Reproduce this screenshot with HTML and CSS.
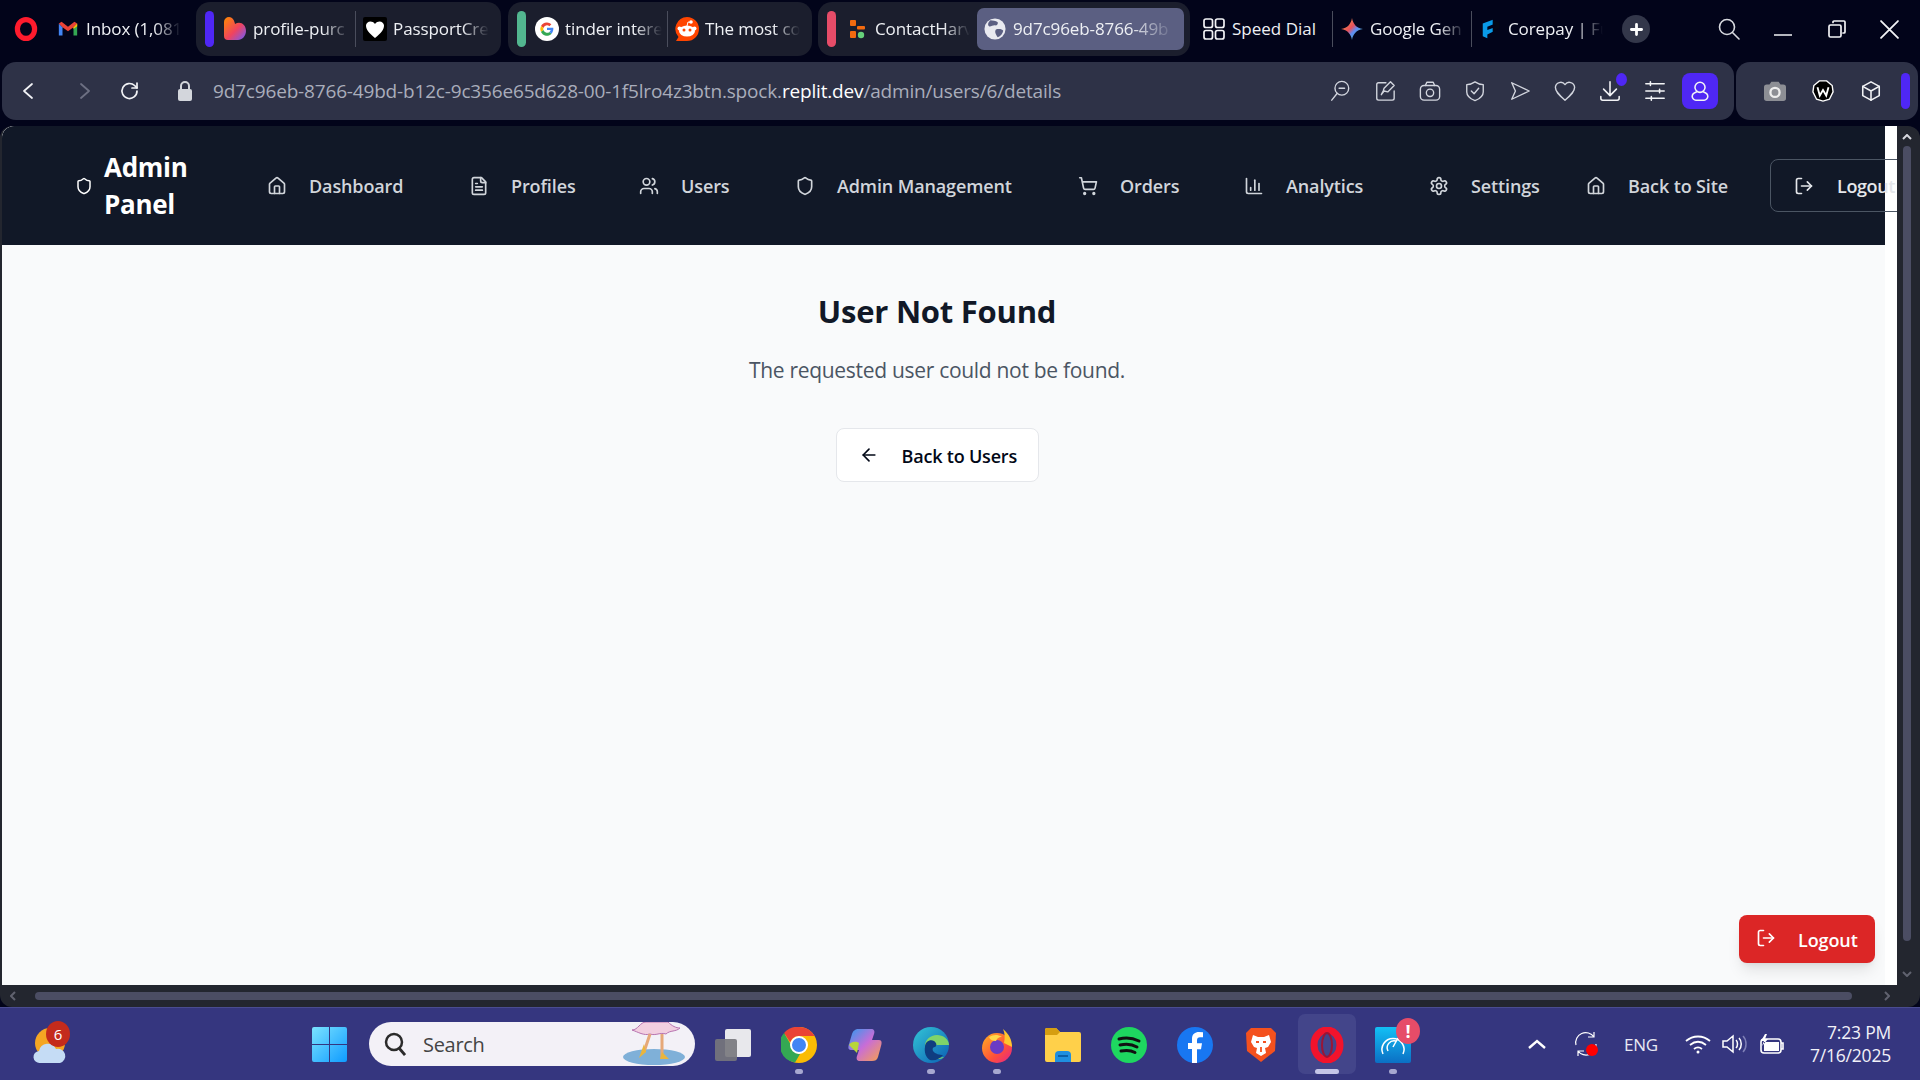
FILE: index.html
```html
<!DOCTYPE html>
<html lang="en">
<head>
<meta charset="utf-8">
<title>Admin Panel</title>
<link rel="stylesheet" href="styles.css">
</head>
<body>
<svg class="sprite" aria-hidden="true">
  <symbol id="i-shield" viewBox="0 0 24 24"><path d="M20 13c0 5-3.5 7.5-7.66 8.95a1 1 0 0 1-.67-.01C7.5 20.5 4 18 4 13V6a1 1 0 0 1 1-1c2 0 4.5-1.2 6.24-2.72a1.17 1.17 0 0 1 1.52 0C14.51 3.81 17 5 19 5a1 1 0 0 1 1 1z"/></symbol>
  <symbol id="i-home" viewBox="0 0 24 24"><path d="M15 21v-8a1 1 0 0 0-1-1h-4a1 1 0 0 0-1 1v8"/><path d="M3 10a2 2 0 0 1 .709-1.528l7-5.999a2 2 0 0 1 2.582 0l7 5.999A2 2 0 0 1 21 10v9a2 2 0 0 1-2 2H5a2 2 0 0 1-2-2z"/></symbol>
  <symbol id="i-file" viewBox="0 0 24 24"><path d="M15 2H6a2 2 0 0 0-2 2v16a2 2 0 0 0 2 2h12a2 2 0 0 0 2-2V7Z"/><path d="M14 2v4a2 2 0 0 0 2 2h4"/><path d="M10 9H8"/><path d="M16 13H8"/><path d="M16 17H8"/></symbol>
  <symbol id="i-users" viewBox="0 0 24 24"><path d="M16 21v-2a4 4 0 0 0-4-4H6a4 4 0 0 0-4 4v2"/><circle cx="9" cy="7" r="4"/><path d="M22 21v-2a4 4 0 0 0-3-3.87"/><path d="M16 3.13a4 4 0 0 1 0 7.75"/></symbol>
  <symbol id="i-cart" viewBox="0 0 24 24"><circle cx="8" cy="21" r="1"/><circle cx="19" cy="21" r="1"/><path d="M2.05 2.05h2l2.66 12.42a2 2 0 0 0 2 1.58h9.78a2 2 0 0 0 1.95-1.57l1.65-7.43H5.12"/></symbol>
  <symbol id="i-chart" viewBox="0 0 24 24"><path d="M3 3v16a2 2 0 0 0 2 2h16"/><path d="M18 17V9"/><path d="M13 17V5"/><path d="M8 17v-3"/></symbol>
  <symbol id="i-gear" viewBox="0 0 24 24"><path d="M12.22 2h-.44a2 2 0 0 0-2 2v.18a2 2 0 0 1-1 1.73l-.43.25a2 2 0 0 1-2 0l-.15-.08a2 2 0 0 0-2.73.73l-.22.38a2 2 0 0 0 .73 2.73l.15.1a2 2 0 0 1 1 1.72v.51a2 2 0 0 1-1 1.74l-.15.09a2 2 0 0 0-.73 2.73l.22.38a2 2 0 0 0 2.73.73l.15-.08a2 2 0 0 1 2 0l.43.25a2 2 0 0 1 1 1.73V20a2 2 0 0 0 2 2h.44a2 2 0 0 0 2-2v-.18a2 2 0 0 1 1-1.73l.43-.25a2 2 0 0 1 2 0l.15.08a2 2 0 0 0 2.73-.73l.22-.39a2 2 0 0 0-.73-2.73l-.15-.08a2 2 0 0 1-1-1.74v-.5a2 2 0 0 1 1-1.74l.15-.09a2 2 0 0 0 .73-2.73l-.22-.38a2 2 0 0 0-2.73-.73l-.15.08a2 2 0 0 1-2 0l-.43-.25a2 2 0 0 1-1-1.73V4a2 2 0 0 0-2-2z"/><circle cx="12" cy="12" r="3"/></symbol>
  <symbol id="i-logout" viewBox="0 0 24 24"><path d="M9 21H5a2 2 0 0 1-2-2V5a2 2 0 0 1 2-2h4"/><path d="m16 17 5-5-5-5"/><path d="M21 12H9"/></symbol>
  <symbol id="i-arrow" viewBox="0 0 24 24"><path d="m12 19-7-7 7-7"/><path d="M19 12H5"/></symbol>
</svg>

<header class="tabstrip">
  <svg class="opera-logo" viewBox="0 0 24 24"><ellipse cx="12" cy="12" rx="8.600" ry="9.400" fill="none" stroke="#ff1b2d" stroke-width="5.200"/></svg>
  <div class="tab tab-gmail">
    <svg class="ic-22" viewBox="0 0 24 24"><path d="M2 6v13h4V10z" fill="#4285f4"/><path d="M22 6v13h-4V10z" fill="#34a853"/><path d="M2 6l4 4 6 4.500 6-4.500 4-4-3-2-7 5.500L5 4z" fill="#ea4335"/><path d="M18 10l4-4v3l-4 3z" fill="#fbbc04"/></svg>
    <span class="tab-label w-inbox">Inbox (1,081</span>
  </div>

  <div class="group group-a">
    <i class="bar bar-violet"></i>
    <div class="tab">
      <svg class="ic-24" viewBox="0 0 24 24"><defs><linearGradient id="g-heart" x1="0" y1="0" x2="1" y2="1"><stop offset="0" stop-color="#ff8a00"/><stop offset=".55" stop-color="#f0435f"/><stop offset="1" stop-color="#6a5cff"/></linearGradient></defs><path d="M1 5a5 5 0 0 1 5-5c4 0 5.500 4 6 7 5-3 11 0 11 7 0 5-4 9-8 9H5a4 4 0 0 1-4-4z" fill="url(#g-heart)"/></svg>
      <span class="tab-label w-97">profile-purc</span>
    </div>
    <i class="sep"></i>
    <div class="tab">
      <svg class="ic-24" viewBox="0 0 24 24"><rect width="24" height="24" rx="2" fill="#000"/><path d="M12 21C6 16 3 12.500 3 8.500 3 5 8.500 2.500 12 7c3.500-4.500 9-2 9 1.500 0 4-3 7.500-9 12.500z" fill="#fff"/></svg>
      <span class="tab-label w-96">PassportCre</span>
    </div>
  </div>

  <div class="group group-b">
    <i class="bar bar-green"></i>
    <div class="tab">
      <svg class="ic-24" viewBox="0 0 24 24"><circle cx="12" cy="12" r="12" fill="#fff"/><path d="M12 5.500a6.500 6.500 0 0 1 4.400 1.700l-2 2A3.800 3.800 0 0 0 8.400 11L6 9a6.500 6.500 0 0 1 6-3.500z" fill="#ea4335"/><path d="M6 9l2.400 2a3.800 3.800 0 0 0 0 2L6 15a6.600 6.600 0 0 1 0-6z" fill="#fbbc04"/><path d="M6 15l2.400-2a3.800 3.800 0 0 0 6 1.900l2.200 1.800A6.500 6.500 0 0 1 6 15z" fill="#34a853"/><path d="M12 10.800h6.300c.3 2-.3 4.300-1.700 5.900l-2.200-1.800c.7-.5 1.100-1.200 1.300-1.800H12z" fill="#4285f4"/></svg>
      <span class="tab-label w-97">tinder intere</span>
    </div>
    <i class="sep"></i>
    <div class="tab">
      <svg class="ic-24" viewBox="0 0 24 24"><path d="M12 0a12 12 0 0 1 0 24H1l2.500-4A12 12 0 0 1 12 0z" fill="#ff4500"/><ellipse cx="12" cy="14" rx="8" ry="5.500" fill="#fff"/><circle cx="4.500" cy="11.500" r="2" fill="#fff"/><circle cx="19.500" cy="11.500" r="2" fill="#fff"/><circle cx="16" cy="5" r="1.800" fill="#fff"/><path d="M12 9l1-4 3 .5" fill="none" stroke="#fff"/><circle cx="9" cy="13" r="1.500" fill="#ff4500"/><circle cx="15" cy="13" r="1.500" fill="#ff4500"/></svg>
      <span class="tab-label w-95">The most co</span>
    </div>
  </div>

  <div class="group group-c">
    <i class="bar bar-red"></i>
    <div class="tab tab-contact">
      <svg class="ic-24" viewBox="0 0 24 24"><rect x="5" y="3" width="6" height="6" rx="1" fill="#f26a0f"/><rect x="12" y="9" width="8" height="3.500" rx="1" fill="#f26a0f"/><rect x="5" y="14" width="6" height="7" rx="1" fill="#f26a0f"/><circle cx="16" cy="18" r="3.200" fill="#66d17a"/></svg>
      <span class="tab-label w-95">ContactHarv</span>
    </div>
    <div class="tab tab-active">
      <svg class="ic-22" viewBox="0 0 24 24"><circle cx="12" cy="12" r="11.500" fill="#e9eaf0"/><path d="M7 2.500c2 .5 6 .5 8 2 .5 2-1 4-3 3.500S7 10 5.500 9 4 5 7 2.500zM13 12.500c3-1 7-.5 8 1.500-.5 3-3 6-6 7-1.500-2-4-6-2-8.500z" fill="#5b5f82"/></svg>
      <span class="tab-label w-162">9d7c96eb-8766-49b</span>
    </div>
  </div>

  <div class="tab tab-speed">
    <svg class="ic-22 line-w" viewBox="0 0 22 22"><rect x="1" y="1" width="8.500" height="8.500" rx="2"/><rect x="12.500" y="1" width="8.500" height="8.500" rx="2"/><rect x="1" y="12.500" width="8.500" height="8.500" rx="2"/><rect x="12.500" y="12.500" width="8.500" height="8.500" rx="2"/></svg>
    <span class="tab-label tab-label-plain">Speed Dial</span>
  </div>
  <i class="sep sep-tall sep-speed"></i>
  <div class="tab">
    <svg class="ic-24" viewBox="0 0 24 24"><defs><linearGradient id="g-gem" x1="0" y1="0" x2="1" y2="1"><stop offset="0" stop-color="#f4a83c"/><stop offset=".45" stop-color="#e8505b"/><stop offset=".6" stop-color="#5f8df5"/><stop offset="1" stop-color="#3cb878"/></linearGradient></defs><path d="M12 1c1 6 4.500 10 11 11-6.500 1-10 5-11 11-1-6-4.500-10-11-11 6.500-1 10-5 11-11z" fill="url(#g-gem)"/></svg>
    <span class="tab-label w-95">Google Gen</span>
  </div>
  <i class="sep sep-core"></i>
  <div class="tab">
    <svg class="ic-22" viewBox="0 0 24 24"><path d="M3 6l11-4v5l-6 2.500V13l6-2v4l-6 3v4l-5-2z" fill="#0a9be8"/><path d="M14 2l7 3v6l-7 4v-4l3-1.500V8l-3-1z" fill="#050714"/></svg>
    <span class="tab-label w-95">Corepay | Fu</span>
  </div>
  <div class="plus"><svg class="ic-plus" viewBox="0 0 14 14"><path d="M7 1.500v11M1.500 7h11"/></svg></div>
  <svg class="win-search line-w" viewBox="0 0 22 22"><circle cx="9" cy="9" r="7.500"/><path d="M14.500 14.500l6.500 6.500"/></svg>
  <svg class="win-min line-w" viewBox="0 0 18 18"><path d="M0 15h18"/></svg>
  <svg class="win-restore line-w" viewBox="0 0 18 18"><rect x="1" y="5" width="12" height="12" rx="1.500"/><path d="M5 2.500V2a1 1 0 0 1 1-1h10a1 1 0 0 1 1 1v10a1 1 0 0 1-1 1h-1"/></svg>
  <svg class="win-close line-w" viewBox="0 0 18 18"><path d="M1 1l16 16M17 1L1 17"/></svg>
</header>

<div class="toolbar">
  <div class="addressbar">
    <svg class="nav-arrow line-w" viewBox="0 0 10 16"><path d="M9 1L1 8l8 7"/></svg>
    <svg class="nav-arrow nav-forward line-dim" viewBox="0 0 10 16"><path d="M1 1l8 7-8 7"/></svg>
    <svg class="nav-reload line-w" viewBox="0 0 20 20"><path d="M17 10a7.500 7.500 0 1 1-2.400-5.500L17 7"/><path d="M17 2v5h-5" /></svg>
    <svg class="nav-lock" viewBox="0 0 14 20"><rect y="8" width="14" height="12" rx="2" fill="#d3d6dc"/><path d="M3 9V5a4 4 0 0 1 8 0v4" fill="none" stroke="#d3d6dc" stroke-width="2"/></svg>
    <div class="url">9d7c96eb-8766-49bd-b12c-9c356e65d628-00-1f5lro4z3btn.spock.<b>replit.dev</b>/admin/users/6/details</div>
    <div class="tools">
      <span class="tool"><svg class="line-s" viewBox="0 0 24 24"><circle cx="14" cy="9" r="7.500"/><path d="M3 22l6-7.500M11 9h6"/></svg></span>
      <span class="tool"><svg class="line-s" viewBox="0 0 24 24"><path d="M13 3H5a2 2 0 0 0-2 2v15a2 2 0 0 0 2 2h15a2 2 0 0 0 2-2v-8"/><path d="M18 2l4 4-7 7-4-1-3 4 2-4 1-3z"/></svg></span>
      <span class="tool"><svg class="line-s" viewBox="0 0 24 24"><rect x="1.500" y="6" width="21" height="16" rx="4"/><path d="M7 6l1.500-3.500h7L17 6"/><circle cx="12" cy="14" r="4"/></svg></span>
      <span class="tool"><svg class="line-s" viewBox="0 0 24 24"><path d="M21 13c0 5-4 7.500-9 9.500C7 20.500 3 18 3 13V5c3 0 6-1 9-3 3 2 6 3 9 3z"/><path d="M8 12l3 3 5-6"/></svg></span>
      <span class="tool"><svg class="line-s" viewBox="0 0 24 24"><path d="M3 3l19 9-19 9 4-9z" stroke-linejoin="round"/></svg></span>
      <span class="tool"><svg class="line-s" viewBox="0 0 24 24"><path d="M12 22C5 16 1.500 12.500 1.500 8A5.800 5.800 0 0 1 12 5a5.800 5.800 0 0 1 10.500 3c0 4.500-3.500 8-10.500 14z"/></svg></span>
      <span class="tool tool-dl"><svg class="line-w" viewBox="0 0 24 24"><path d="M12 2v15M5 10l7 7 7-7M2 18v2a2 2 0 0 0 2 2h16a2 2 0 0 0 2-2v-2"/></svg><i class="dl-dot"></i></span>
      <span class="tool"><svg class="line-w" viewBox="0 0 24 24"><path d="M2 4h20M2 12h20M2 20h20"/><path d="M7 2v4M17 10v4M8 18v4"/></svg></span>
      <span class="tool tool-profile"><svg class="line-w" viewBox="0 0 24 24"><circle cx="12" cy="8" r="5.500"/><path d="M8 13c-3 1-4.500 3-4.500 5s2 4 4 4h9c2 0 4-2 4-4s-1.500-4-4.500-5"/></svg></span>
    </div>
  </div>
  <div class="extbar">
    <span class="ext"><svg viewBox="0 0 24 24"><path d="M8 2h8l2 3h3a3 3 0 0 1 3 3v12a3 3 0 0 1-3 3H3a3 3 0 0 1-3-3V8a3 3 0 0 1 3-3h3z" fill="#8d8f95"/><circle cx="12" cy="13.500" r="5" fill="none" stroke="#eee" stroke-width="2.500"/></svg></span>
    <span class="ext"><svg viewBox="0 0 24 24"><path d="M8 1h8l6 5 1 7-4 8-7 2-7-2-4-8 1-7z" fill="#000" stroke="#fff" stroke-width="1.500"/><path d="M6 8l2.500 9 3.500-6 3.500 6L18 8" fill="none" stroke="#fff" stroke-width="2"/></svg></span>
    <span class="ext"><svg class="line-w" viewBox="0 0 24 24"><path d="M12 2l9 5v10l-9 5-9-5V7z"/><path d="M3 7l9 5 9-5M12 12v10"/></svg></span>
    <i class="ext-bar"></i>
  </div>
</div>

<div class="browser">
  <div class="page-row">
    <div class="page">
      <div class="site">
        <nav class="site-nav">
          <div class="brand">
            <svg class="ic brand-ic"><use href="#i-shield"/></svg>
            <span class="brand-text">Admin<br>Panel</span>
          </div>
          <a class="nav-link l-dashboard"><svg class="ic"><use href="#i-home"/></svg><span>Dashboard</span></a>
          <a class="nav-link l-profiles"><svg class="ic"><use href="#i-file"/></svg><span>Profiles</span></a>
          <a class="nav-link l-users"><svg class="ic"><use href="#i-users"/></svg><span>Users</span></a>
          <a class="nav-link l-admin"><svg class="ic"><use href="#i-shield"/></svg><span>Admin Management</span></a>
          <a class="nav-link l-orders"><svg class="ic"><use href="#i-cart"/></svg><span>Orders</span></a>
          <a class="nav-link l-analytics"><svg class="ic"><use href="#i-chart"/></svg><span>Analytics</span></a>
          <a class="nav-link l-settings"><svg class="ic"><use href="#i-gear"/></svg><span>Settings</span></a>
          <a class="nav-link l-back"><svg class="ic"><use href="#i-home"/></svg><span>Back to Site</span></a>
          <a class="nav-logout"><svg class="ic"><use href="#i-logout"/></svg><span>Logout</span></a>
        </nav>
        <main class="notfound">
          <h1>User Not Found</h1>
          <p>The requested user could not be found.</p>
          <a class="back-btn"><svg class="ic"><use href="#i-arrow"/></svg><span>Back to Users</span></a>
        </main>
      </div>
      <a class="float-logout"><svg class="ic"><use href="#i-logout"/></svg><span>Logout</span></a>
    </div>
    <div class="vscroll">
      <svg class="sb-arrow" viewBox="0 0 10 6"><path d="M1 5l4-4 4 4"/></svg>
      <i class="v-thumb"></i>
      <svg class="sb-arrow sb-dim" viewBox="0 0 10 6"><path d="M1 1l4 4 4-4"/></svg>
    </div>
  </div>
  <div class="hscroll">
    <svg class="sb-h" viewBox="0 0 6 10"><path d="M5 1L1 5l4 4"/></svg>
    <i class="h-thumb"></i>
    <svg class="sb-h" viewBox="0 0 6 10"><path d="M1 1l4 4-4 4"/></svg>
  </div>
</div>

<footer class="taskbar">
  <div class="weather">
    <svg viewBox="0 0 34 42"><circle cx="17" cy="20" r="15" fill="#f5a623"/><path d="M7 40a6 6 0 0 1-1-12 9 9 0 0 1 17-2 7 7 0 0 1 4 14z" fill="#c5dcf5"/></svg>
    <span class="weather-badge">6</span>
  </div>
  <svg class="winlogo" viewBox="0 0 35 35"><defs><linearGradient id="g-win" x1="0" y1="0" x2="1" y2="1"><stop offset="0" stop-color="#7be3ff"/><stop offset="1" stop-color="#0f9bff"/></linearGradient></defs><path d="M0 2a2 2 0 0 1 2-2h15v17H0zM18 0h15a2 2 0 0 1 2 2v15H18zM0 18h17v17H2a2 2 0 0 1-2-2zM18 18h17v15a2 2 0 0 1-2 2H18z" fill="url(#g-win)"/></svg>
  <div class="searchbox">
    <svg class="search-ic" viewBox="0 0 22 24"><circle cx="10" cy="10" r="8" fill="none" stroke="#2b2b2b" stroke-width="2.500"/><path d="M15 16l6 7" stroke="#2b2b2b" stroke-width="2.800"/></svg>
    <span class="search-text">Search</span>
    <svg class="search-art" viewBox="0 0 64 44"><ellipse cx="32" cy="35" rx="31" ry="8" fill="#7fb0d8"/><path d="M10 8c6 0 8-8 14-8h22c4 4 8 6 12 6-4 4-10 2-14 6-6-2-10 2-16 0-6 2-12-2-18-4z" fill="#f2cfe0" stroke="#b773b0"/><path d="M28 12l-6 18M40 12l0 24" stroke="#e6a878" stroke-width="3"/><path d="M22 22l-5 14 7-6zM40 30l-2 7h9z" fill="#eab53e"/></svg>
  </div>
  <div class="dock">
    <div class="dock-item"><svg viewBox="0 0 36 36"><rect x="10" y="2" width="26" height="28" rx="2" fill="#e8e8ec"/><rect y="12" width="22" height="22" rx="2" fill="#77777c" fill-opacity=".9"/></svg></div>
    <div class="dock-item has-run"><svg viewBox="0 0 36 36"><circle cx="18" cy="18" r="18" fill="#fbbc04"/><path d="M18 0a18 18 0 0 1 15.600 9H18a9 9 0 0 0-8.600 6.500L3 6A18 18 0 0 1 18 0z" fill="#ea4335"/><path d="M3 6l7 12a9 9 0 0 0 9 9l-5 8.500A18 18 0 0 1 3 6z" fill="#34a853"/><circle cx="18" cy="18" r="8" fill="#4285f4" stroke="#fff" stroke-width="2"/></svg></div>
    <div class="dock-item"><svg viewBox="0 0 36 36"><defs><linearGradient id="g-cop" x1="0" y1="0" x2="1" y2="1"><stop offset="0" stop-color="#2e9bf0"/><stop offset=".5" stop-color="#c86dd7"/><stop offset="1" stop-color="#f8a24b"/></linearGradient></defs><path d="M12 2h12c3 0 4 2 3 5l-2 6h7c3 0 3 3 2 6l-3 11c-1 3-3 4-6 4H13c-3 0-4-2-3-5l2-6H4c-3 0-3-3-2-6L5 7c1-3 3-5 7-5z" fill="url(#g-cop)"/><path d="M2 18c2-4 8-4 10-2l-2 10z" fill="#b8d53a"/></svg></div>
    <div class="dock-item has-run"><svg viewBox="0 0 36 36"><defs><linearGradient id="g-edge" x1="0" y1="0" x2="1" y2="1"><stop offset="0" stop-color="#33c6d6"/><stop offset="1" stop-color="#0b5fb4"/></linearGradient></defs><circle cx="18" cy="18" r="18" fill="url(#g-edge)"/><path d="M36 18c0-6-6-10-12-10-7 0-12 5-12 11 0 7 6 14 14 13 2 0 4-1 5-2-8 2-12-3-12-7 0-3 3-5 7-5h10z" fill="#7fd46a"/><path d="M12 20c0-5 5-8 9-6 3 2 3 5 1 6-2 0-3 2-2 4 2 3 7 4 10 4-3 4-8 6-13 5-4-2-6-8-5-13z" fill="#0f3d80"/></svg></div>
    <div class="dock-item has-run"><svg viewBox="0 0 36 36"><defs><linearGradient id="g-ff" x1="0" y1="0" x2="1" y2="1"><stop offset="0" stop-color="#ffb321"/><stop offset=".6" stop-color="#ff4f3a"/><stop offset="1" stop-color="#e3218f"/></linearGradient></defs><circle cx="18" cy="21" r="15" fill="url(#g-ff)"/><path d="M24 2c6 5 9 11 9 18l-8-4c1-5 1-10-1-14z" fill="#ffc62e"/><circle cx="18" cy="20" r="7" fill="#6a3bc5"/><path d="M10 10c4-2 8-3 13 0-4 0-5 2-6 4-3 0-6-1-7-4z" fill="#ffd84a"/></svg></div>
    <div class="dock-item"><svg viewBox="0 0 36 36"><path d="M0 3a2 2 0 0 1 2-2h9l4 4h19a2 2 0 0 1 2 2v26a2 2 0 0 1-2 2H2a2 2 0 0 1-2-2z" fill="#ffd04a"/><path d="M0 3a2 2 0 0 1 2-2h9l4 4-3 3H0z" fill="#d69e10"/><path d="M10 28a4 4 0 0 1 4-4h8a4 4 0 0 1 4 4v7H10z" fill="#1f8fe0"/><path d="M13 29h10" stroke="#0b5fa8" stroke-width="2"/></svg></div>
    <div class="dock-item"><svg viewBox="0 0 36 36"><circle cx="18" cy="18" r="18" fill="#1ed760"/><path d="M8 12c7-2 14-1 20 2M9 18c6-1.500 12-1 17 2M10 24c5-1 10-.8 14 1.500" fill="none" stroke="#111" stroke-width="3" stroke-linecap="round"/></svg></div>
    <div class="dock-item"><svg viewBox="0 0 36 36"><circle cx="18" cy="18" r="18" fill="#1877f2"/><path d="M15 36V22h-4v-6h4v-4c0-5 3-7 7-7l4 .300v5h-3c-2 0-3 1-3 3v3h5l-1 6h-4v14z" fill="#fff"/></svg></div>
    <div class="dock-item"><svg viewBox="0 0 36 36"><path d="M8 1h20l5 5-1 18-14 11L4 24 3 6z" fill="#f4511e"/><path d="M10 8l5 2h6l5-2 2 7-3 5-3 1 1 5-5 3-5-3 1-5-3-1-3-5z" fill="#fff"/><path d="M13 15h3M20 15h3M18 20v5" stroke="#f4511e" stroke-width="1.800"/></svg></div>
    <div class="dock-item active"><svg viewBox="0 0 36 36"><ellipse cx="18" cy="18" rx="13" ry="15" fill="none" stroke="#f2132c" stroke-width="7"/><ellipse cx="18" cy="18" rx="5" ry="12" fill="none" stroke="#9a1536" stroke-width="2"/></svg></div>
    <div class="dock-item has-run"><svg viewBox="0 0 36 36"><defs><linearGradient id="g-sp" x1="0" y1="0" x2="0" y2="1"><stop offset="0" stop-color="#13c0f5"/><stop offset="1" stop-color="#0b6fc4"/></linearGradient></defs><rect width="36" height="36" rx="2" fill="url(#g-sp)"/><path d="M8 27a11 11 0 1 1 20 0M13 24a7 7 0 0 1 8-10M18 20l5-9" fill="none" stroke="#fff" stroke-width="1.500"/></svg><span class="alert">!</span></div>
  </div>
  <div class="tray">
    <svg class="tray-chev" viewBox="0 0 18 10"><path d="M1 9l8-7 8 7"/></svg>
    <div class="tray-sync">
      <svg viewBox="0 0 24 26"><path d="M2 14A10 10 0 0 1 20 6M20 1v5h-6M22 13A10 10 0 0 1 4 20M4 25v-5h6"/></svg>
      <i class="sync-dot"></i>
    </div>
    <span class="tray-lang">ENG</span>
    <svg class="tray-wifi" viewBox="0 0 26 20"><path d="M1 7c7-6 17-6 24 0M5 11c5-4 11-4 16 0M9 15c2.500-2 5.500-2 8 0"/><circle cx="13" cy="18" r="1.500" fill="#fff" stroke="none"/></svg>
    <svg class="tray-vol" viewBox="0 0 26 20"><path d="M1 7h4l6-5v16l-6-5H1zM14 6c2 2 2 6 0 8M17 4c3 3 3 9 0 12"/><path class="dim" d="M21 2c4 4 4 12 0 16"/></svg>
    <svg class="tray-batt" viewBox="0 0 26 22"><rect x="3" y="6" width="20" height="14" rx="3"/><path d="M23 10h2v6h-2"/><path class="solid" d="M7 1L3 8h3l-2 5 6-7H7l2-5zM6 9h15v9H6z"/></svg>
    <div class="clock"><span>7:23 PM</span><span>7/16/2025</span></div>
  </div>
</footer>
</body>
</html>
```

FILE: styles.css
```css
* { box-sizing: border-box; }
html, body { margin: 0; height: 100%; }
body {
  width: 1920px;
  height: 1080px;
  overflow: hidden;
  background: #02041a;
  font-family: "Open Sans", "Noto Sans", sans-serif;
  color: #fff;
  display: flex;
  flex-direction: column;
}
.sprite { position: absolute; width: 0; height: 0; }
svg { display: block; flex: none; }
.ic { width: 20px; height: 20px; fill: none; stroke: currentColor; stroke-width: 2; stroke-linecap: round; stroke-linejoin: round; }
.line-w, .line-s, .line-dim { fill: none; stroke-linecap: round; stroke-linejoin: round; }
.line-w { stroke: #f2f3f6; stroke-width: 1.7; }
.line-s { stroke: #d2d5de; stroke-width: 1.5; }
.line-dim { stroke: #6d7083; stroke-width: 1.8; }
.ic-22 { width: 22px; height: 22px; }
.ic-24 { width: 24px; height: 24px; }

/* tab strip */
.tabstrip { height: 62px; display: flex; align-items: center; padding: 0 0 4px 14px; flex: none; }
.opera-logo { width: 24px; height: 24px; margin-right: 19px; }
.tab { display: flex; align-items: center; gap: 6px; flex: none; }
.tab-gmail { margin-right: 15px; gap: 7px; }
.tab-label {
  display: block;
  font-size: 17px;
  line-height: 24px;
  white-space: nowrap;
  overflow: hidden;
  color: #eef0f4;
  letter-spacing: -.1px;
  -webkit-mask-image: linear-gradient(to right, #000 72%, transparent 100%);
  mask-image: linear-gradient(to right, #000 72%, transparent 100%);
}
.tab-label-plain { letter-spacing: 0; overflow: visible; -webkit-mask-image: none; mask-image: none; }
.w-inbox { width: 95px; }
.w-95 { width: 95px; }
.w-96 { width: 96px; }
.w-97 { width: 97px; }
.w-162 { width: 162px; }
.group { height: 54px; display: flex; align-items: center; background: #1b1e2d; border-radius: 14px; padding: 0 6px 0 9px; flex: none; }
.group-a { width: 305px; margin-right: 7px; }
.group-b { width: 304px; margin-right: 6px; }
.group-c { width: 372px; }
.bar { display: block; width: 9px; height: 36px; border-radius: 5px; margin-right: 9px; flex: none; }
.bar-violet { background: #4f27f5; }
.bar-green { background: #52b68f; }
.bar-red { background: #e64c68; }
.sep { display: block; width: 1px; height: 36px; background: #4a4d5c; margin: 0 7px 0 5px; flex: none; }
.tab-contact { margin-right: 7px; }
.tab-active { width: 207px; height: 42px; background: #5b5f82; border-radius: 7px; padding-left: 7px; gap: 7px; }
.tab-speed { margin-left: 13px; gap: 7px; }
.sep-speed { margin-left: 16px; }
.sep-core { margin-left: 6px; margin-right: 8px; }
.plus { width: 28px; height: 28px; border-radius: 50%; background: #33374a; display: flex; align-items: center; justify-content: center; margin-left: 19px; }
.ic-plus { width: 13px; height: 13px; fill: none; stroke: #fff; stroke-width: 3; stroke-linecap: round; }
.win-search { width: 22px; height: 22px; margin-left: 68px; stroke-width: 1.6; stroke: #d7d9df; }
.win-min { width: 18px; height: 18px; margin-left: 34px; }
.win-restore { width: 18px; height: 18px; margin-left: 36px; }
.win-close { width: 19px; height: 19px; margin-left: 34px; }

/* toolbar */
.toolbar { height: 58px; display: flex; padding: 0 2px; gap: 2px; flex: none; }
.addressbar { width: 1732px; background: #2e3247; border-radius: 14px; display: flex; align-items: center; padding: 0 16px 0 21px; }
.extbar { width: 182px; background: #2e3247; border-radius: 14px; display: flex; align-items: center; padding-left: 15px; }
.nav-arrow { width: 10px; height: 16px; }
.nav-forward { margin-left: 47px; }
.nav-reload { width: 20px; height: 20px; margin-left: 30px; stroke-width: 1.7; }
.nav-lock { width: 14px; height: 20px; margin-left: 38px; }
.url { margin-left: 21px; font-size: 19px; letter-spacing: -.17px; color: #a9adbb; white-space: nowrap; }
.url b { font-weight: 400; color: #fff; }
.tools { margin-left: auto; display: flex; gap: 9px; }
.tool { width: 36px; height: 36px; display: flex; align-items: center; justify-content: center; position: relative; }
.tool svg { width: 22px; height: 22px; }
.dl-dot { position: absolute; width: 11px; height: 13px; border-radius: 50%; background: #4f27f5; right: 1px; top: 0; }
.tool-profile { background: #4f27f5; border-radius: 8px; }
.ext { width: 48px; height: 36px; display: flex; align-items: center; justify-content: center; }
.ext svg { width: 22px; height: 22px; }
.ext-bar { display: block; width: 9px; height: 36px; background: #4f27f5; border-radius: 5px; margin-left: 6px; }

/* browser viewport */
.browser { margin-top: 6px; height: 881px; background: #23262f; border-radius: 12px; flex: none; display: flex; flex-direction: column; overflow: hidden; }
.page-row { height: 859px; display: flex; flex: none; }
.page { width: 1895px; margin-left: 2px; height: 859px; background: #fff; position: relative; overflow: hidden; border-radius: 12px 0 0 0; color: #111827; }
.site { width: 1883px; height: 859px; background: #f9fafb; }
.site-nav { height: 119px; background: #111827; display: flex; align-items: center; padding-left: 75px; color: #d1d5db; white-space: nowrap; }
.brand { display: flex; align-items: center; gap: 11px; width: 190px; color: #fff; flex: none; }
.brand-ic { width: 18px; height: 18px; margin-left: -2px; }
.brand-text { font-size: 26px; font-weight: 700; line-height: 37px; letter-spacing: -.3px; }
.nav-link { display: flex; align-items: center; gap: 22px; font-size: 18px; font-weight: 600; letter-spacing: -.12px; flex: none; }
.l-dashboard { width: 202px; }
.l-profiles { width: 170px; }
.l-users { width: 156px; }
.l-admin { width: 283px; }
.l-orders { width: 166px; }
.l-analytics { width: 185px; }
.l-settings { width: 157px; }
.l-back { width: 184px; }
.nav-logout { display: flex; align-items: center; gap: 23px; height: 53px; width: 180px; flex: none; border: 1px solid #4b5563; border-radius: 8px; padding-left: 23px; font-size: 18px; font-weight: 600; letter-spacing: -.4px; color: #e5e7eb; }
.notfound { display: flex; flex-direction: column; align-items: center; padding: 46px 13px 0 0; }
.notfound h1 { margin: 0; font-size: 31px; line-height: 40px; font-weight: 700; letter-spacing: -.25px; color: #111827; }
.notfound p { margin: 23px 0 0; font-size: 21px; line-height: 32px; color: #4b5563; letter-spacing: -.3px; }
.back-btn { margin-top: 42px; height: 54px; width: 203px; background: #fff; border: 1px solid #e5e7eb; border-radius: 8px; display: flex; align-items: center; gap: 23px; padding: 1px 0 0 22px; font-size: 18px; font-weight: 600; letter-spacing: -.2px; color: #020817; }
.back-btn .ic { margin-top: -1px; }
.float-logout { position: absolute; right: 22px; bottom: 22px; width: 136px; height: 48px; background: #dc2626; color: #fff; border-radius: 8px; display: flex; align-items: center; gap: 22px; padding: 1px 0 0 17px; font-size: 18px; font-weight: 600; letter-spacing: -.1px; box-shadow: 0 10px 15px -3px rgba(0,0,0,.1), 0 4px 6px -4px rgba(0,0,0,.1); }
.float-logout .ic { margin-top: -3px; }
.vscroll { width: 20px; margin-right: 3px; display: flex; flex-direction: column; align-items: center; padding: 8px 0; gap: 6px; }
.v-thumb { display: block; width: 8px; flex: 1; background: #4b4d63; border-radius: 4px; margin-bottom: 24px; }
.sb-arrow { width: 10px; height: 6px; fill: none; stroke: #d6d7de; stroke-width: 2; }
.sb-dim { stroke: #60626f; }
.hscroll { height: 22px; display: flex; align-items: center; padding-left: 10px; }
.h-thumb { display: block; width: 1817px; height: 8px; background: #4b4d63; border-radius: 4px; margin-left: 19px; margin-right: 32px; }
.sb-h { width: 6px; height: 10px; fill: none; stroke: #60626f; stroke-width: 2; }

/* taskbar */
.taskbar { height: 73px; background: #35367f; flex: none; display: flex; align-items: center; border-top: 1px solid #4a4c91; }
.weather { width: 34px; height: 42px; margin-left: 33px; position: relative; }
.weather svg { width: 34px; height: 42px; }
.weather-badge { position: absolute; left: 13px; top: -2px; width: 24px; height: 26px; border-radius: 50%; background: #c42b1c; color: #fff; font-size: 15px; line-height: 26px; text-align: center; }
.winlogo { width: 35px; height: 35px; margin-left: 245px; }
.searchbox { width: 326px; height: 44px; margin-left: 22px; background: #f3f1f7; border-radius: 22px; display: flex; align-items: center; padding-left: 15px; }
.search-ic { width: 22px; height: 24px; }
.search-text { margin-left: 17px; font-size: 20px; color: #444; letter-spacing: -.3px; }
.search-art { width: 64px; height: 44px; margin-left: auto; margin-right: 9px; }
.dock { display: flex; margin-left: 5px; height: 100%; }
.dock-item { width: 66px; height: 100%; display: flex; align-items: center; justify-content: center; position: relative; }
.dock-item svg { width: 36px; height: 36px; margin-top: 1px; }
.has-run::after { content: ""; position: absolute; left: 29px; bottom: 6px; width: 8px; height: 5px; border-radius: 3px; background: #a7a8d0; }
.active::before { content: ""; position: absolute; left: 4px; top: 6px; width: 58px; height: 60px; background: #43458a; border-radius: 7px; }
.active svg { position: relative; }
.active::after { content: ""; position: absolute; left: 21px; bottom: 6px; width: 24px; height: 5px; border-radius: 3px; background: #c5c6e8; }
.alert { position: absolute; right: 6px; top: 10px; width: 24px; height: 26px; border-radius: 50%; background: #e64c68; color: #fff; font-size: 18px; font-weight: 700; line-height: 26px; text-align: center; }
.tray { flex: 1; display: flex; align-items: center; padding-left: 102px; height: 100%; }
.tray-chev { width: 18px; height: 10px; fill: none; stroke: #fff; stroke-width: 2.400; }
.tray-sync { width: 24px; height: 26px; margin-left: 28px; position: relative; }
.tray-sync svg { width: 24px; height: 26px; fill: none; stroke: #fff; stroke-width: 1.200; }
.sync-dot { position: absolute; left: 12px; top: 13px; width: 12px; height: 12px; border-radius: 50%; background: #f00; }
.tray-lang { margin-left: 26px; font-size: 17px; color: #e9e9f3; letter-spacing: -.2px; }
.tray-wifi { width: 26px; height: 20px; margin-left: 27px; fill: none; stroke: #fff; stroke-width: 1.800; }
.tray-vol { width: 26px; height: 20px; margin-left: 11px; fill: none; stroke: #fff; stroke-width: 1.500; }
.tray-vol .dim { stroke: #7d7eb5; }
.tray-batt { width: 26px; height: 22px; margin-left: 10px; fill: none; stroke: #fff; stroke-width: 1.600; }
.tray-batt .solid { fill: #fff; stroke: none; }
.clock { margin-left: auto; margin-right: 29px; display: flex; flex-direction: column; align-items: flex-end; font-size: 17.500px; line-height: 23px; color: #f1f1f8; letter-spacing: -.2px; }
```
